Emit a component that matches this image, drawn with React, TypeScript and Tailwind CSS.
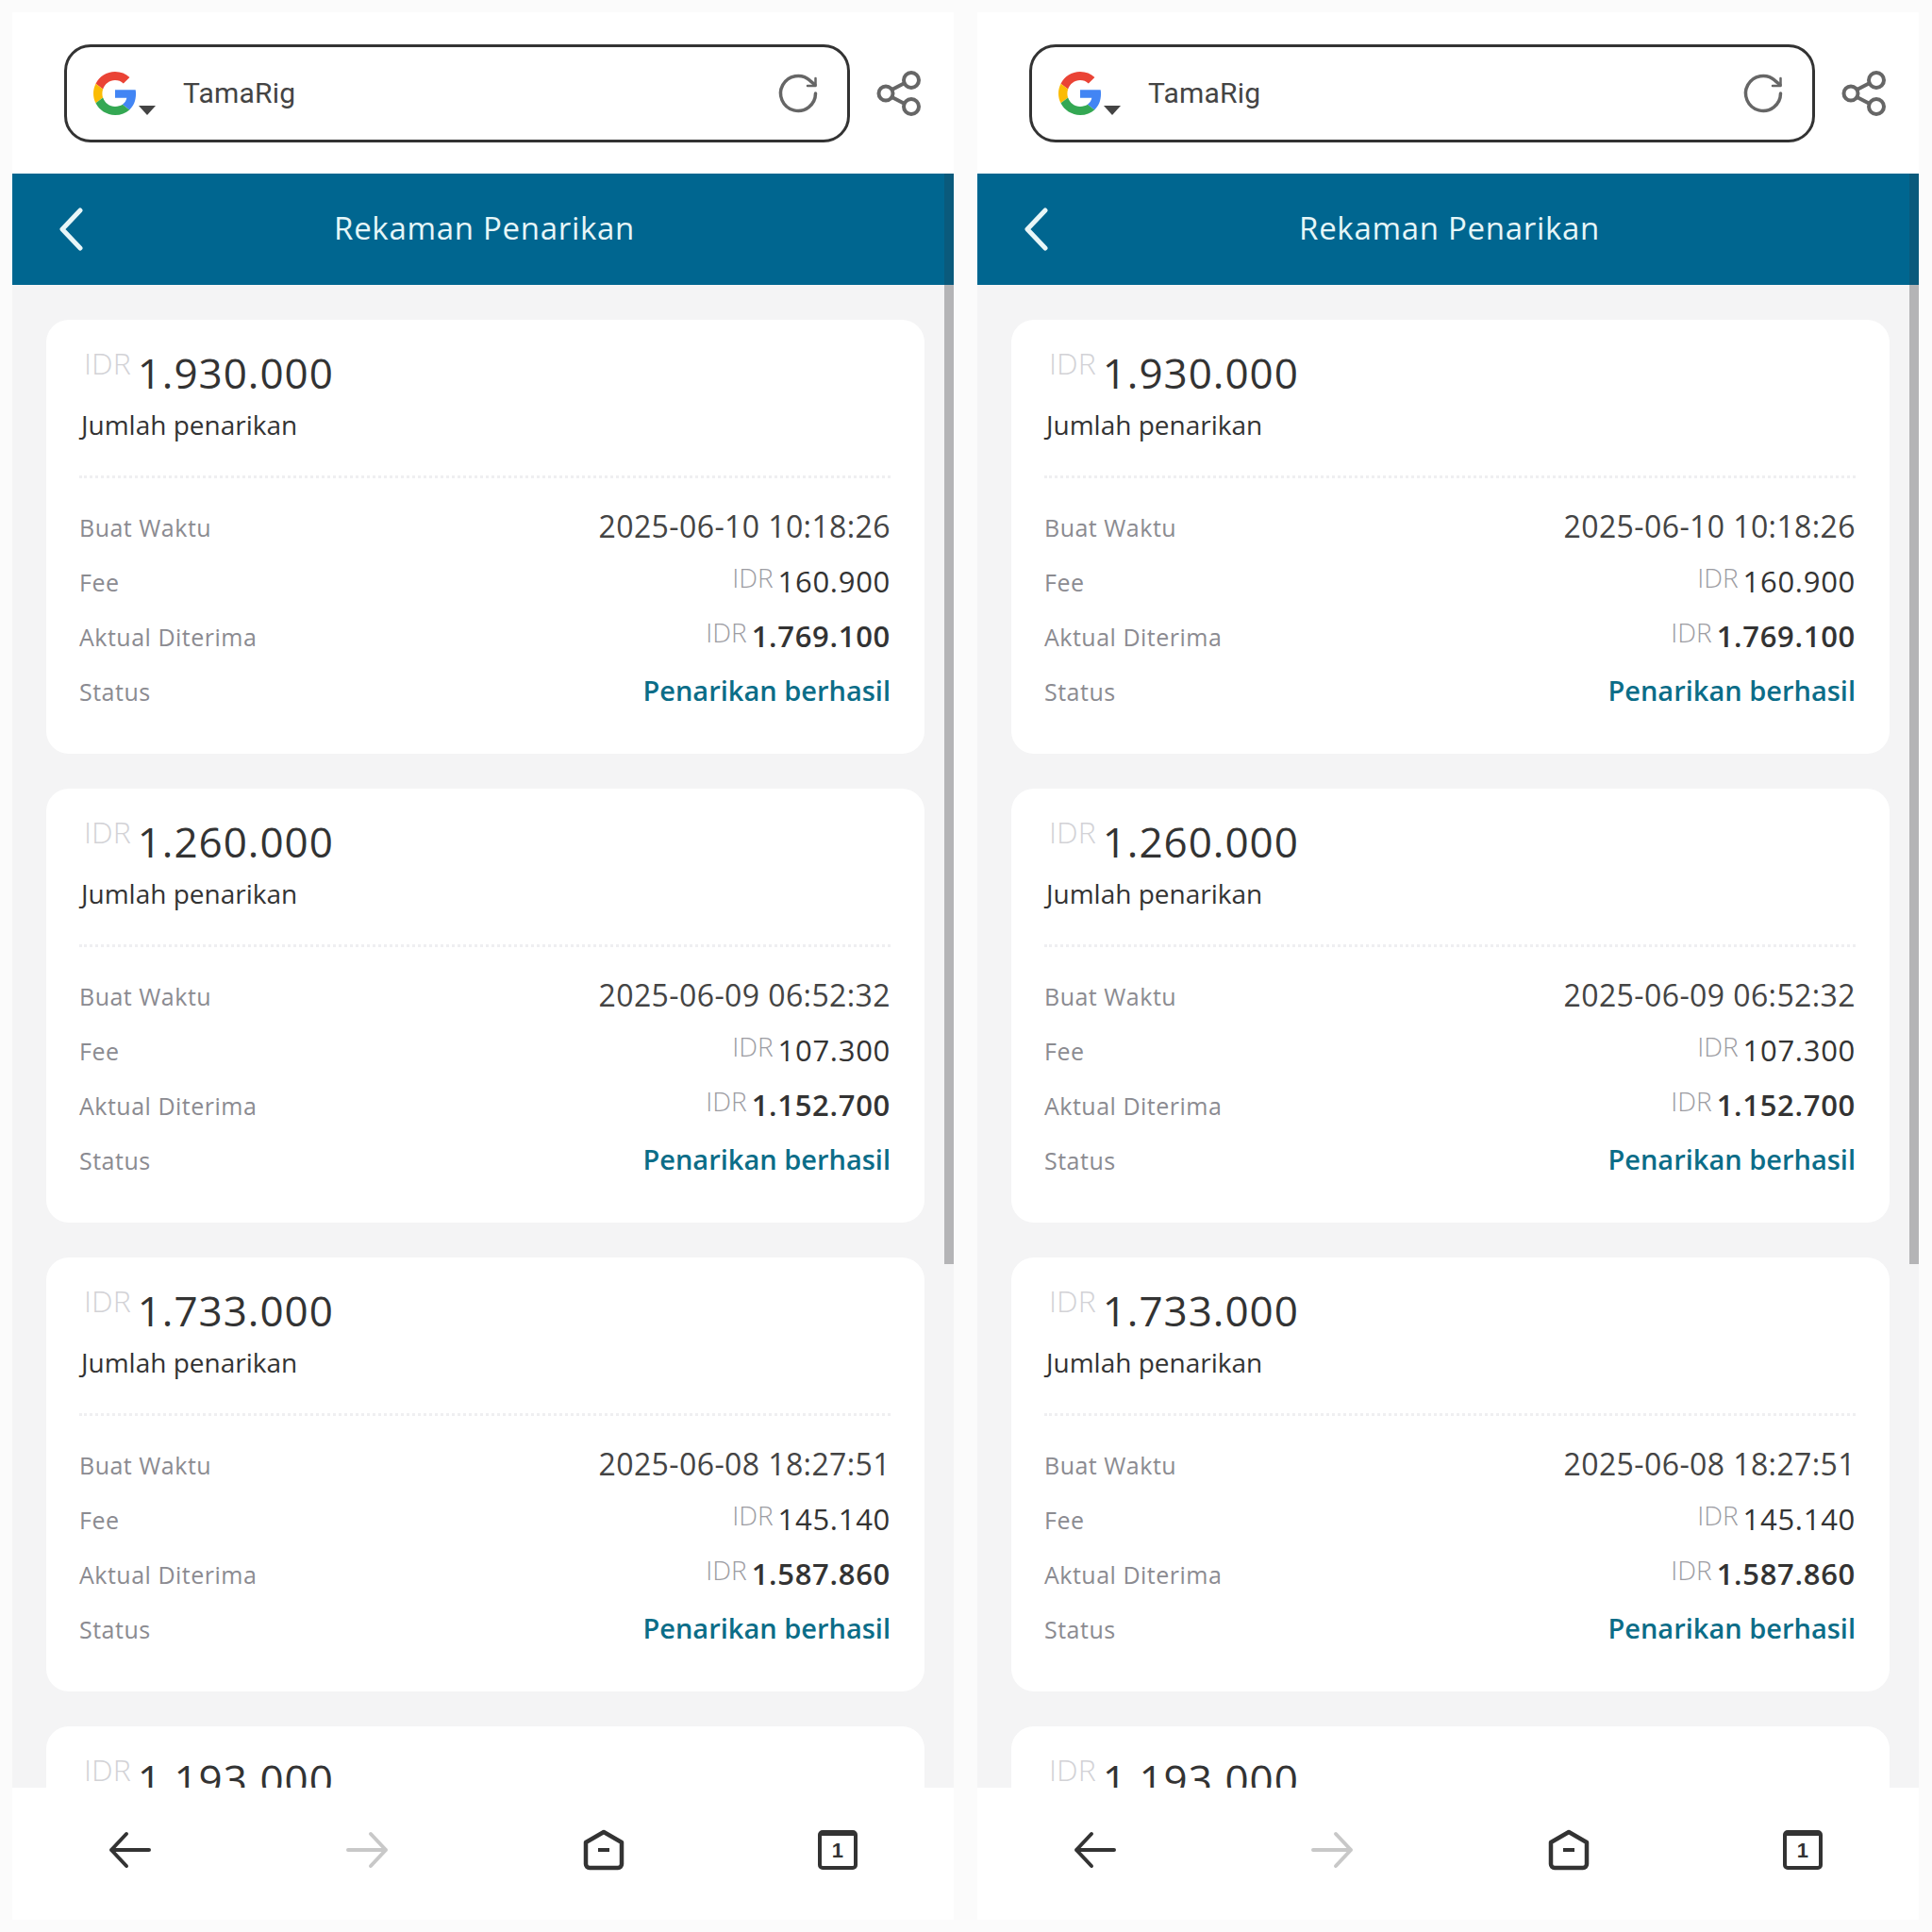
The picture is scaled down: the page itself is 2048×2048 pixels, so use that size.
const withdrawals = [
  { amount: "1.930.000", time: "2025-06-10 10:18:26", fee: "160.900", received: "1.769.100" },
  { amount: "1.260.000", time: "2025-06-09 06:52:32", fee: "107.300", received: "1.152.700" },
  { amount: "1.733.000", time: "2025-06-08 18:27:51", fee: "145.140", received: "1.587.860" },
  { amount: "1.193.000", time: "2025-06-07 12:10:05", fee: "95.440", received: "1.097.560" },
];

function GoogleLogo() {
  return (
    <svg width="46" height="46" viewBox="0 0 48 48" className="shrink-0">
      <path fill="#EA4335" d="M24 9.5c3.5 0 6.7 1.2 9.2 3.6l6.9-6.9C35.900 2.400 30.500 0 24 0 14.600 0 6.500 5.400 2.600 13.200l8 6.200C12.500 13.700 17.800 9.500 24 9.500z" />
      <path fill="#4285F4" d="M47 24.500c0-1.600-.1-3.100-.4-4.500H24v9h12.900c-.6 3-2.200 5.500-4.700 7.200l7.700 6c4.500-4.200 7.100-10.300 7.100-17.700z" />
      <path fill="#FBBC05" d="M10.500 28.600C10 27.200 9.800 25.600 9.800 24s.3-3.200.8-4.600l-8-6.200C.900 16.500 0 20.100 0 24s.9 7.500 2.600 10.800l7.900-6.200z" />
      <path fill="#34A853" d="M24 48c6.500 0 11.900-2.100 15.900-5.800l-7.700-6c-2.200 1.400-4.900 2.300-8.200 2.300-6.200 0-11.500-4.200-13.400-9.900l-8 6.200C6.500 42.600 14.600 48 24 48z" />
    </svg>
  );
}

function ReloadIcon() {
  return (
    <svg width="46" height="46" viewBox="0 0 46 46" fill="none" stroke="#666" strokeWidth="3.500" strokeLinecap="round" strokeLinejoin="round">
      <path d="M41.500 23a18.500 18.500 0 1 1-6-13.700L41 14" />
      <path d="M41.500 7v8H33" strokeWidth="2.500" />
    </svg>
  );
}

function ShareIcon() {
  return (
    <svg width="50" height="50" viewBox="0 0 50 50" fill="none" stroke="#666" strokeWidth="4">
      <circle cx="10" cy="25" r="7.500" />
      <circle cx="37" cy="11" r="8" />
      <circle cx="37" cy="39" r="8" />
      <path d="M16.500 21 30 14M16.500 29 30 36" />
    </svg>
  );
}

function ArrowIcon({ flip, color }: { flip?: boolean; color: string }) {
  return (
    <svg width="46" height="40" viewBox="0 0 46 40" fill="none" stroke={color} strokeWidth="4" strokeLinecap="round" strokeLinejoin="round" className={flip ? "-scale-x-100" : ""}>
      <path d="M19 3 3 20l16 17M3 20h40" />
    </svg>
  );
}

function HomeIcon() {
  return (
    <svg width="44" height="44" viewBox="0 0 44 44" fill="none" stroke="#333" strokeWidth="4.500" strokeLinejoin="round">
      <path d="M3 14 22 3l19 11v23a4 4 0 0 1-4 4H7a4 4 0 0 1-4-4z" />
      <path d="M16 22h12" strokeWidth="4" />
    </svg>
  );
}

function TabsIcon() {
  return (
    <div className="w-[42px] h-[42px] border-[4px] border-t-[6px] border-[#333] rounded-[5px] flex items-center justify-center font-['Liberation_Sans',sans-serif] font-bold text-[22px] text-[#333] leading-none">
      1
    </div>
  );
}

function Row({ label, children }: { label: string; children: React.ReactNode }) {
  return (
    <div className="flex items-center justify-between h-[58px]">
      <span className="text-[25px] text-[#8b8b91] tracking-[0.5px]">{label}</span>
      <div className="-mt-[4px]">{children}</div>
    </div>
  );
}

function Money({ value, bold }: { value: string; bold?: boolean }) {
  return (
    <span className={`flex items-start text-[31px] leading-[38px] text-[#333] tracking-[0.7px] ${bold ? "font-semibold" : ""}`}>
      <span className="text-[28px] leading-[28px] text-[#9c9ca2] font-light tracking-normal mr-[5px] mt-[1px]">IDR</span>
      {value}
    </span>
  );
}

function Card({ item }: { item: (typeof withdrawals)[number] }) {
  return (
    <div className="bg-white rounded-[24px] h-[460px] shrink-0 pl-[35px] pr-[36px] pt-[26px]">
      <div className="flex items-start h-[52px] pl-[5px]">
        <span className="text-[32px] leading-[36px] text-[#d2d2d6] font-light mr-[7px] mt-[2px]">IDR</span>
        <span className="text-[44px] leading-[52px] tracking-[1px] text-[#333] mt-[4px]">{item.amount}</span>
      </div>
      <div className="text-[28px] leading-[36px] text-[#333] mt-[15px] pl-[2px]">Jumlah penarikan</div>
      <div className="border-b-[3px] border-dotted border-[#efeff1] mt-[36px] mb-[24px]" />
      <Row label="Buat Waktu">
        <span className="text-[32px] tracking-[0.4px] text-[#444]">{item.time}</span>
      </Row>
      <Row label="Fee">
        <Money value={item.fee} />
      </Row>
      <Row label="Aktual Diterima">
        <Money value={item.received} bold />
      </Row>
      <Row label="Status">
        <span className="text-[29px] font-semibold text-[#0b6d88]">Penarikan berhasil</span>
      </Row>
    </div>
  );
}

function Phone() {
  return (
    <div className="relative w-[998px] h-[2022px] flex flex-col overflow-hidden bg-white shrink-0">
      <div className="h-[171px] shrink-0 flex items-center pl-[55px] pr-[32px] gap-[28px]">
        <div className="flex-1 h-[104px] border-[3px] border-[#333] rounded-[28px] flex items-center pl-[28px] pr-[29px]">
          <GoogleLogo />
          <svg width="18" height="12" viewBox="0 0 18 12" className="mt-[36px] ml-[2px] shrink-0">
            <path d="M0 1h18L9 11z" fill="#444" />
          </svg>
          <span className="ml-[29px] text-[30px] tracking-[0.2px] text-[#444] font-['Roboto',sans-serif]">TamaRig</span>
          <div className="ml-auto">
            <ReloadIcon />
          </div>
        </div>
        <ShareIcon />
      </div>

      <div className="relative h-[118px] shrink-0 bg-[#006690] flex items-center justify-center">
        <svg width="30" height="46" viewBox="0 0 30 46" fill="none" stroke="#e8f6f8" strokeWidth="5" strokeLinecap="round" strokeLinejoin="round" className="absolute left-[48px] top-[36px]">
          <path d="M24 3 5 23l19 20" />
        </svg>
        <span className="text-[33px] font-medium text-[#e6f6f8] tracking-[0.7px] -mt-[2px] ml-[3px] font-['Open_Sans',sans-serif]">Rekaman Penarikan</span>
        <div className="absolute right-0 top-0 bottom-0 w-[10px] bg-[#0a5a7c]" />
      </div>

      <div className="relative flex-1 min-h-0 overflow-hidden bg-[#f4f4f5] flex flex-col gap-[37px] pt-[37px] pl-[36px] pr-[31px]">
        {withdrawals.map((item) => (
          <Card key={item.time} item={item} />
        ))}
        <div className="absolute right-0 top-0 w-[10px] h-[1038px] bg-[#b4b4b6]" />
      </div>

      <div className="h-[140px] shrink-0 bg-white flex items-center justify-between pl-[102px] pr-[102px] pb-[8px]">
        <ArrowIcon color="#333" />
        <ArrowIcon flip color="#c8c8c8" />
        <HomeIcon />
        <TabsIcon />
      </div>
    </div>
  );
}

export default function App() {
  return (
    <div className="w-[2048px] h-[2048px] bg-[#fbfbfb] flex gap-[25px] pl-[13px] pt-[13px] font-['Open_Sans',sans-serif]">
      <Phone />
      <Phone />
    </div>
  );
}
